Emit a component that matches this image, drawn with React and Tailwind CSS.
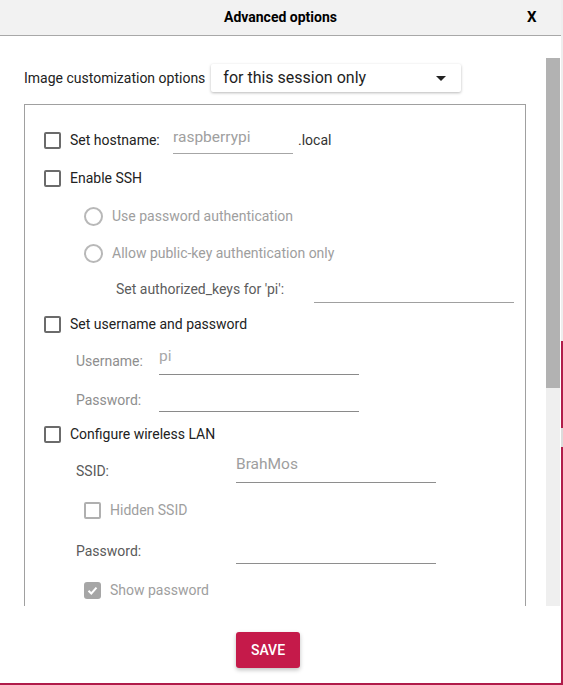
import React from "react";

function Check({ light = false }) {
  return (
    <span
      className={
        "block w-[17px] h-[17px] shrink-0 rounded-[2px] border-2 " +
        (light ? "border-[#b0b0b0]" : "border-[#6b6b6b]")
      }
    />
  );
}

function CheckedBox() {
  return (
    <span className="flex items-center justify-center w-[17px] h-[17px] shrink-0 rounded-[3px] bg-[#a6a6a6]">
      <svg width="13" height="13" viewBox="0 0 13 13">
        <polyline points="2.5,6.8 5.3,9.5 10.5,3.6" fill="none" stroke="#ffffff" strokeWidth="2" />
      </svg>
    </span>
  );
}

function Radio() {
  return <span className="block w-[19px] h-[19px] shrink-0 rounded-full border-2 border-[#b8b8b8]" />;
}

export default function App() {
  return (
    <div className="w-[563px] h-[685px] flex flex-col overflow-hidden bg-[#eeeeee] font-['Roboto',sans-serif]">
      <div className="flex h-[683px]">
        <div className="w-[561px] h-full flex flex-col bg-white rounded-br-[3px]">
          {/* header */}
          <div className="h-[36px] shrink-0 flex items-center bg-[#f2f2f2] border-b border-[#a8a8a8]">
            <div className="w-[35px]" />
            <div className="flex-1 text-center text-[14px] font-bold text-black">Advanced options</div>
            <div className="w-[35px] pl-[1px] text-[15px] font-bold text-black">X</div>
          </div>

          {/* body */}
          <div className="flex h-[570px] shrink-0">
            <div className="w-[546px] pl-[24px] pt-[28px] flex flex-col">
              <div className="h-[28px] shrink-0 flex items-center">
                <span className="text-[14px] text-[#222222]">Image customization options</span>
                <div className="ml-[6px] w-[250px] h-[28px] flex items-center justify-between pl-[12px] pr-[15px] bg-white rounded-[2px] shadow-[0_1px_3px_rgba(0,0,0,0.28)]">
                  <span className="text-[16px] text-[#1e1e1e]">for this session only</span>
                  <svg width="10" height="5" viewBox="0 0 10 5">
                    <polygon points="0,0 10,0 5,5" fill="#222222" />
                  </svg>
                </div>
              </div>

              <div className="mt-[12px] w-[502px] flex-1 overflow-hidden border-t border-x border-[#a0a0a0] pt-[16px] flex flex-col text-[14px]">
                {/* hostname */}
                <div className="h-[38px] shrink-0 flex items-center">
                  <span className="ml-[19px]"><Check /></span>
                  <span className="ml-[9px] w-[103px] text-[#222222]">Set hostname:</span>
                  <div className="w-[120px] h-[28px] pb-[3px] flex items-center border-b border-[#a6a6a6] text-[15.5px] text-[#a0a0a0]">
                    raspberrypi
                  </div>
                  <span className="ml-[5px] text-[#333333]">.local</span>
                </div>
                {/* ssh */}
                <div className="h-[38px] shrink-0 flex items-center">
                  <span className="ml-[19px]"><Check /></span>
                  <span className="ml-[9px] text-[#222222]">Enable SSH</span>
                </div>
                <div className="h-[38px] shrink-0 flex items-center">
                  <span className="ml-[59px]"><Radio /></span>
                  <span className="ml-[9px] text-[#9e9e9e]">Use password authentication</span>
                </div>
                <div className="h-[37px] shrink-0 flex items-center">
                  <span className="ml-[59px]"><Radio /></span>
                  <span className="ml-[9px] text-[#9e9e9e]">Allow public-key authentication only</span>
                </div>
                <div className="h-[35px] shrink-0 flex items-center">
                  <span className="ml-[91px] w-[198px] text-[#5c5c5c]">Set authorized_keys for 'pi':</span>
                  <div className="w-[200px] h-[26px] border-b border-[#a0a0a0]" />
                </div>
                {/* user */}
                <div className="h-[35px] shrink-0 flex items-center">
                  <span className="ml-[19px]"><Check /></span>
                  <span className="ml-[9px] text-[#222222]">Set username and password</span>
                </div>
                <div className="h-[39px] shrink-0 flex items-center">
                  <span className="ml-[51px] w-[83px] text-[#8e8e8e]">Username:</span>
                  <div className="w-[200px] h-[26px] pb-[9px] flex items-center border-b border-[#8a8a8a] text-[15.5px] text-[#a8a8a8]">
                    pi
                  </div>
                </div>
                <div className="h-[38px] shrink-0 flex items-center">
                  <span className="ml-[51px] w-[83px] text-[#8e8e8e]">Password:</span>
                  <div className="w-[200px] h-[24px] border-b border-[#8a8a8a]" />
                </div>
                {/* wifi */}
                <div className="h-[30px] shrink-0 flex items-center">
                  <span className="ml-[19px]"><Check /></span>
                  <span className="ml-[9px] text-[#222222]">Configure wireless LAN</span>
                </div>
                <div className="h-[44px] shrink-0 flex items-center">
                  <span className="ml-[51px] w-[160px] text-[#5a5a5a]">SSID:</span>
                  <div className="w-[200px] h-[24px] pb-[12px] flex items-center border-b border-[#8e8e8e] text-[15.5px] text-[#9e9e9e]">
                    BrahMos
                  </div>
                </div>
                <div className="h-[34px] shrink-0 flex items-center">
                  <span className="ml-[59px]"><Check light /></span>
                  <span className="ml-[9px] text-[#9e9e9e]">Hidden SSID</span>
                </div>
                <div className="h-[48px] shrink-0 flex items-center">
                  <span className="ml-[51px] w-[160px] text-[#5a5a5a]">Password:</span>
                  <div className="w-[200px] h-[26px] border-b border-[#8e8e8e]" />
                </div>
                <div className="h-[30px] shrink-0 flex items-center">
                  <span className="ml-[59px]"><CheckedBox /></span>
                  <span className="ml-[9px] text-[#9e9e9e]">Show password</span>
                </div>
              </div>
            </div>

            {/* scrollbar */}
            <div className="mt-[22px] w-[14px] h-[548px] flex flex-col bg-[#efefef]">
              <div className="h-[330px] bg-[#b2b2b2]" />
            </div>
          </div>

          {/* footer */}
          <div className="flex-1 flex justify-center pt-[26px] pr-[25px]">
            <button className="w-[64px] h-[36px] rounded-[3px] bg-[#c51a4a] text-white text-[14px] font-medium shadow-[0_2px_4px_rgba(0,0,0,0.25)]">
              SAVE
            </button>
          </div>
        </div>

        {/* right edge strip */}
        <div className="w-[2px] flex flex-col">
          <div className="h-[341px] bg-[#eeeeee]" />
          <div className="h-[87px] bg-[#b01c4a]" />
          <div className="h-[19px] bg-[#dcdcdc]" />
          <div className="flex-1 bg-[#b01c4a]" />
        </div>
      </div>
      <div className="h-[2px] bg-[#b01c4a]" />
    </div>
  );
}
